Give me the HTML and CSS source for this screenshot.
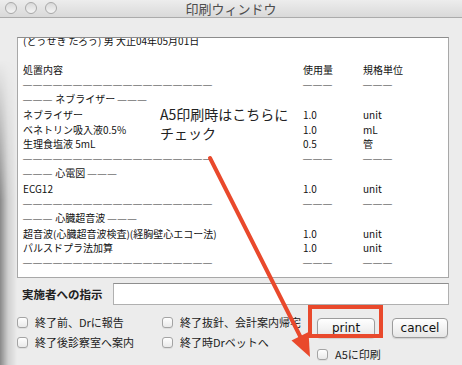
FILE: index.html
```html
<!DOCTYPE html>
<html lang="ja">
<head>
<meta charset="utf-8">
<title>印刷ウィンドウ</title>
<link rel="stylesheet" href="styles.css">
</head>
<body>
<div class="window">
  <div class="titlebar">
    <div class="lights"><span class="light"></span><span class="light"></span><span class="light"></span></div>
    <div class="title">印刷ウィンドウ</div>
  </div>
  <div class="main">
    <div class="textbox">
      <div class="sheet">
        <div class="full">(とうせき たろう) 男 大正04年05月01日</div>
        <div class="full">&nbsp;</div>
        <span>処置内容</span><span>使用量</span><span>規格単位</span>
        <span class="dash">———————————————————</span><span class="dash">———</span><span class="dash">———</span>
        <span><span class="dash">———</span> ネブライザー <span class="dash">———</span></span><span></span><span></span>
        <span>ネブライザー</span><span>1.0</span><span>unit</span>
        <span>ベネトリン吸入液0.5%</span><span>1.0</span><span>mL</span>
        <span>生理食塩液 5mL</span><span>0.5</span><span>管</span>
        <span class="dash">———————————————————</span><span class="dash">———</span><span class="dash">———</span>
        <span><span class="dash">———</span> 心電図 <span class="dash">———</span></span><span></span><span></span>
        <span>ECG12</span><span>1.0</span><span>unit</span>
        <span class="dash">———————————————————</span><span class="dash">———</span><span class="dash">———</span>
        <span><span class="dash">———</span> 心臓超音波 <span class="dash">———</span></span><span></span><span></span>
        <span>超音波(心臓超音波検査)(経胸壁心エコー法)</span><span>1.0</span><span>unit</span>
        <span>パルスドプラ法加算</span><span>1.0</span><span>unit</span>
        <span class="dash">———————————————————</span><span class="dash">———</span><span class="dash">———</span>
      </div>
    </div>
    <div class="instr">
      <div class="instr-label">実施者への指示</div>
      <div class="instr-input"></div>
    </div>
    <div class="bottom">
      <div class="opts">
        <div class="opt"><span class="cb"></span>終了前、Drに報告</div>
        <div class="opt"><span class="cb"></span>終了抜針、会計案内帰宅</div>
        <div class="opt"><span class="cb"></span>終了後診察室へ案内</div>
        <div class="opt"><span class="cb"></span>終了時Drベットへ</div>
      </div>
      <div class="actions">
        <div class="buttons">
          <div class="btn btn-print">print</div>
          <div class="btn btn-cancel">cancel</div>
        </div>
        <div class="opt a5"><span class="cb"></span>A5に印刷</div>
      </div>
    </div>
  </div>
  <div class="note">A5印刷時はこちらに<br>チェック</div>
  <svg class="markup" width="462" height="365" viewBox="0 0 462 365">
    <rect x="310" y="307" width="71" height="29" fill="none" stroke="#e9492c" stroke-width="4"/>
    <line x1="210" y1="158" x2="300.5" y2="337" stroke="#e9492c" stroke-width="4" stroke-linecap="round"/>
    <polygon points="310,357 308.5,332 291.5,340.5" fill="#e9492c"/>
  </svg>
</div>
</body>
</html>
```
FILE: styles.css
```css
* { box-sizing: border-box; }
html, body { margin: 0; padding: 0; }
body {
  font-family: "Noto Sans CJK JP", "Noto Sans", sans-serif;
  color: #111;
  background: #ececec;
}
.window {
  position: relative;
  width: 462px;
  height: 365px;
  background: #ececec;
  overflow: hidden;
}
.window::before {
  content: "";
  position: absolute;
  left: 0; top: 0; bottom: 0;
  width: 17px;
  background: linear-gradient(to right, rgba(0,0,0,0.42), rgba(0,0,0,0.12) 8px, rgba(0,0,0,0));
  -webkit-mask-image: linear-gradient(to bottom, transparent 60px, black 200px);
  mask-image: linear-gradient(to bottom, transparent 60px, black 200px);
  pointer-events: none;
}
.titlebar {
  position: relative;
  height: 18px;
  background: linear-gradient(#ededed, #d9d9d9);
  border-bottom: 1px solid #ababab;
  display: flex;
  align-items: center;
  justify-content: center;
}
.lights {
  position: absolute;
  left: 5px;
  top: 2px;
  display: flex;
  gap: 8px;
}
.light {
  width: 12px;
  height: 12px;
  border-radius: 50%;
  border: 1px solid #a9a9a9;
  background: linear-gradient(#d9d9d9, #f4f4f4);
}
.title {
  font-size: 13px;
  line-height: 17px;
  color: #4d4d4d;
}
.main {
  padding: 19px 13px 0 17px;
}
.textbox {
  height: 241px;
  background: #fff;
  border: 1px solid #a8a8a8;
  border-top-color: #8c8c8c;
  overflow: hidden;
  padding-left: 5px;
}
.sheet {
  margin-top: -4px;
  display: grid;
  grid-template-columns: 280px 60px 1fr;
  font-size: 10px;
  line-height: 14.6px;
  white-space: nowrap;
}
.full { grid-column: 1 / 4; }
.dash {
  font-family: "Liberation Sans", sans-serif;
  font-size: 9px;
  letter-spacing: 1px;
  color: #333;
}
.instr {
  margin-top: 5px;
  height: 22px;
  display: flex;
  align-items: center;
}
.instr-label {
  width: 96px;
  padding-left: 5px;
  font-size: 11.5px;
  font-weight: 700;
  color: #222;
}
.instr-input {
  flex: 1;
  height: 22px;
  background: #fff;
  border: 1px solid #b0b0b0;
  border-top-color: #8e8e8e;
}
.bottom {
  margin-top: 7px;
  display: flex;
}
.opts {
  width: 300px;
  display: grid;
  grid-template-columns: 145px 155px;
  grid-auto-rows: 20px;
}
.opt {
  display: flex;
  align-items: center;
  gap: 7px;
  font-size: 11px;
  color: #222;
  white-space: nowrap;
}
.cb {
  width: 11px;
  height: 11px;
  flex: none;
  border: 1px solid #a4a4a4;
  border-radius: 3px;
  background: linear-gradient(#ffffff, #e9e9e9);
  box-shadow: 0 1px 0 rgba(0,0,0,0.06);
}
.actions {
  padding-top: 6px;
}
.buttons {
  display: flex;
  gap: 17px;
}
.btn {
  height: 20px;
  border: 1px solid #9c9c9c;
  border-radius: 4px;
  background: linear-gradient(#ffffff, #f3f3f3 50%, #e6e6e6);
  box-shadow: 0 1px 1px rgba(0,0,0,0.12);
  font-family: "DejaVu Sans", sans-serif;
  font-size: 12px;
  line-height: 18px;
  text-align: center;
  color: #111;
}
.btn-print { width: 58px; }
.btn-cancel { width: 56px; }
.a5 {
  margin-top: 10px;
  height: 12px;
}
.note {
  position: absolute;
  left: 160px;
  top: 105px;
  font-size: 14px;
  line-height: 19px;
  color: #222;
}
.markup {
  position: absolute;
  left: 0;
  top: 0;
  pointer-events: none;
}
```
